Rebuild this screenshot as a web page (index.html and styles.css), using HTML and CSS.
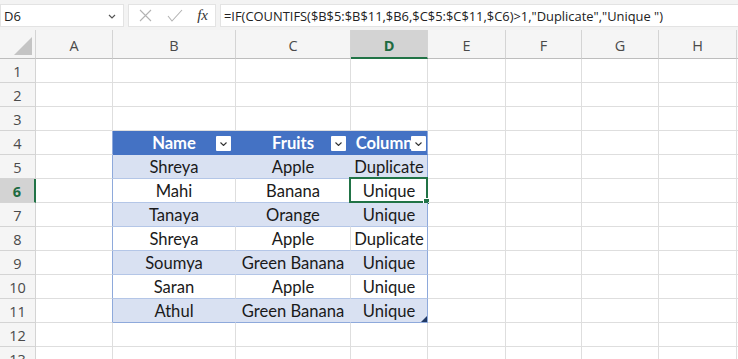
FILE: index.html
```html
<!DOCTYPE html>
<html>
<head>
  <meta charset="utf-8">
  <title>Duplicate check</title>
  <link rel="stylesheet" href="styles.css">
</head>
<body>
  <div class="formula-bar">
    <div class="name-box">
      <span>D6</span>
      <svg class="drop" width="8" height="5" viewBox="0 0 8 5"><path d="M1 1l3 3 3-3" fill="none" stroke="#555" stroke-width="1.2"/></svg>
    </div>
    <div class="fx-box">
      <svg width="13" height="13" viewBox="0 0 13 13"><path d="M1 1l11 11M12 1L1 12" stroke="#b3b3b3" stroke-width="1.1"/></svg>
      <svg width="16" height="13" viewBox="0 0 16 13"><path d="M1 7l4 5L15 1" fill="none" stroke="#b3b3b3" stroke-width="1.1"/></svg>
      <span class="fx">fx</span>
    </div>
    <div class="formula">=IF(COUNTIFS($B$5:$B$11,$B6,$C$5:$C$11,$C6)&gt;1,"Duplicate","Unique ")</div>
  </div>

  <div class="sheet">
    <div class="corner"><span class="tri"></span></div>
    <div class="col-head">A</div>
    <div class="col-head">B</div>
    <div class="col-head">C</div>
    <div class="col-head sel">D</div>
    <div class="col-head">E</div>
    <div class="col-head">F</div>
    <div class="col-head">G</div>
    <div class="col-head">H</div>
    <div class="col-head"></div>

    <div class="row-head">1</div><div class="c"></div><div class="c"></div><div class="c"></div><div class="c"></div><div class="c"></div><div class="c"></div><div class="c"></div><div class="c"></div><div class="c"></div>
    <div class="row-head">2</div><div class="c"></div><div class="c"></div><div class="c"></div><div class="c"></div><div class="c"></div><div class="c"></div><div class="c"></div><div class="c"></div><div class="c"></div>
    <div class="row-head">3</div><div class="c"></div><div class="c"></div><div class="c"></div><div class="c"></div><div class="c"></div><div class="c"></div><div class="c"></div><div class="c"></div><div class="c"></div>

    <div class="row-head">4</div>
    <div class="c edge"></div>
    <div class="c th">Name<span class="filter"><svg width="7" height="4" viewBox="0 0 7 4"><path d="M.5 .5l3 3 3-3" fill="none" stroke="#333" stroke-width="1.1"/></svg></span></div>
    <div class="c th">Fruits<span class="filter"><svg width="7" height="4" viewBox="0 0 7 4"><path d="M.5 .5l3 3 3-3" fill="none" stroke="#333" stroke-width="1.1"/></svg></span></div>
    <div class="c th last">Column1<span class="filter tight"><svg width="7" height="4" viewBox="0 0 7 4"><path d="M.5 .5l3 3 3-3" fill="none" stroke="#333" stroke-width="1.1"/></svg></span></div>
    <div class="c"></div><div class="c"></div><div class="c"></div><div class="c"></div><div class="c"></div>

    <div class="row-head">5</div>
    <div class="c edge"></div><div class="c band">Shreya</div><div class="c band">Apple</div><div class="c band last">Duplicate</div>
    <div class="c"></div><div class="c"></div><div class="c"></div><div class="c"></div><div class="c"></div>

    <div class="row-head sel">6</div>
    <div class="c edge"></div><div class="c plain">Mahi</div><div class="c plain">Banana</div><div class="c plain last">Unique<span class="sel-box"><span class="handle"></span></span></div>
    <div class="c"></div><div class="c"></div><div class="c"></div><div class="c"></div><div class="c"></div>

    <div class="row-head">7</div>
    <div class="c edge"></div><div class="c band">Tanaya</div><div class="c band">Orange</div><div class="c band last">Unique</div>
    <div class="c"></div><div class="c"></div><div class="c"></div><div class="c"></div><div class="c"></div>

    <div class="row-head">8</div>
    <div class="c edge"></div><div class="c plain">Shreya</div><div class="c plain">Apple</div><div class="c plain last">Duplicate</div>
    <div class="c"></div><div class="c"></div><div class="c"></div><div class="c"></div><div class="c"></div>

    <div class="row-head">9</div>
    <div class="c edge"></div><div class="c band">Soumya</div><div class="c band">Green Banana</div><div class="c band last">Unique</div>
    <div class="c"></div><div class="c"></div><div class="c"></div><div class="c"></div><div class="c"></div>

    <div class="row-head">10</div>
    <div class="c edge"></div><div class="c plain">Saran</div><div class="c plain">Apple</div><div class="c plain last">Unique</div>
    <div class="c"></div><div class="c"></div><div class="c"></div><div class="c"></div><div class="c"></div>

    <div class="row-head">11</div>
    <div class="c edge"></div><div class="c band bottom">Athul</div><div class="c band bottom">Green Banana</div><div class="c band bottom last">Unique<span class="resize"></span></div>
    <div class="c"></div><div class="c"></div><div class="c"></div><div class="c"></div><div class="c"></div>

    <div class="row-head">12</div><div class="c"></div><div class="c"></div><div class="c"></div><div class="c"></div><div class="c"></div><div class="c"></div><div class="c"></div><div class="c"></div><div class="c"></div>
    <div class="row-head">13</div><div class="c"></div><div class="c"></div><div class="c"></div><div class="c"></div><div class="c"></div><div class="c"></div><div class="c"></div><div class="c"></div><div class="c"></div>
  </div>
</body>
</html>
```

FILE: styles.css
```css
* {
  box-sizing: border-box;
}
html, body {
  margin: 0;
  height: 100%;
  overflow: hidden;
  background: #fff;
}
body {
  font-family: "Open Sans", "Noto Sans", sans-serif;
  color: #333;
}

/* formula bar */
.formula-bar {
  display: flex;
  gap: 4px;
  height: 30px;
  padding: 4px 0 3px;
  background: #f3f3f3;
}
.name-box, .fx-box, .formula {
  background: #fff;
  border: 1px solid #e3e3e3;
  display: flex;
  align-items: center;
}
.name-box {
  width: 124px;
  justify-content: space-between;
  padding: 0 7px 0 3px;
  font-size: 13px;
  color: #222;
}
.name-box .drop {
  margin-top: 1px;
}
.fx-box {
  width: 88px;
  padding: 0 6px 0 10px;
  justify-content: space-between;
}
.fx {
  font-family: "Liberation Serif", serif;
  font-style: italic;
  font-size: 15px;
  color: #333;
  margin-right: 1px;
}
.formula {
  flex: 1;
  padding-left: 3px;
  font-size: 12.9px;
  color: #222;
  white-space: nowrap;
  border-right: none;
}

/* grid */
.sheet {
  display: grid;
  grid-template-columns: 36px 77px 123px 115px 77px 78px 76px 77px 78px 60px;
  grid-template-rows: 29px;
  grid-auto-rows: 24px;
}
.corner, .col-head, .row-head {
  background: #f5f5f5;
  border-right: 1px solid #d4d4d4;
  border-bottom: 1px solid #d4d4d4;
  color: #4a4a4a;
  font-size: 14.5px;
  display: flex;
  align-items: center;
  justify-content: center;
}
.corner {
  position: relative;
  border-bottom-color: #bdbdbd;
}
.corner .tri {
  position: absolute;
  right: 3px;
  bottom: 3px;
  width: 0;
  height: 0;
  border-left: 18px solid transparent;
  border-bottom: 18px solid #c4c4c4;
}
.col-head {
  border-bottom-color: #bdbdbd;
  padding-top: 3px;
}
.col-head.sel {
  background: #d3d3d3;
  color: #1e6b41;
  font-weight: bold;
  border-bottom: 2px solid #217346;
}
.row-head {
  padding-top: 1px;
}
.row-head.sel {
  background: #d3d3d3;
  color: #1e6b41;
  font-weight: bold;
  border-right: 2px solid #217346;
}

.c {
  position: relative;
  border-right: 1px solid #dedede;
  border-bottom: 1px solid #dedede;
  font-family: Lato, "Liberation Sans", sans-serif;
  font-size: 16.6px;
  color: #1a1a1a;
  text-align: center;
  line-height: 25px;
  white-space: nowrap;
}
.c.edge {
  border-right-color: #8ea9db;
}

/* table */
.th {
  background: #4472c4;
  color: #fff;
  font-weight: bold;
  border-right-color: #4472c4;
  border-bottom-color: #4472c4;
  overflow: hidden;
}
.band {
  background: #d9e1f2;
  border-right-color: #d9e1f2;
  border-bottom-color: #b4c6e7;
}
.plain {
  border-bottom-color: #b4c6e7;
}
.c.last {
  border-right-color: #8ea9db;
}
.c.bottom {
  border-bottom-color: #8ea9db;
}
.filter {
  position: absolute;
  right: 4px;
  top: 5px;
  width: 15px;
  height: 15px;
  background: #fff;
  border-radius: 1px;
  display: flex;
  align-items: center;
  justify-content: center;
}
.filter.tight {
  right: 1px;
}

.sel-box {
  position: absolute;
  left: -2px;
  top: -2px;
  right: -1px;
  bottom: -1px;
  border: 2px solid #217346;
}
.handle {
  position: absolute;
  right: -4px;
  bottom: -4px;
  width: 7px;
  height: 7px;
  background: #217346;
  border: 1px solid #fff;
}
.resize {
  position: absolute;
  right: 0;
  bottom: 0;
  width: 0;
  height: 0;
  border-left: 6px solid transparent;
  border-bottom: 6px solid #203864;
}
```
